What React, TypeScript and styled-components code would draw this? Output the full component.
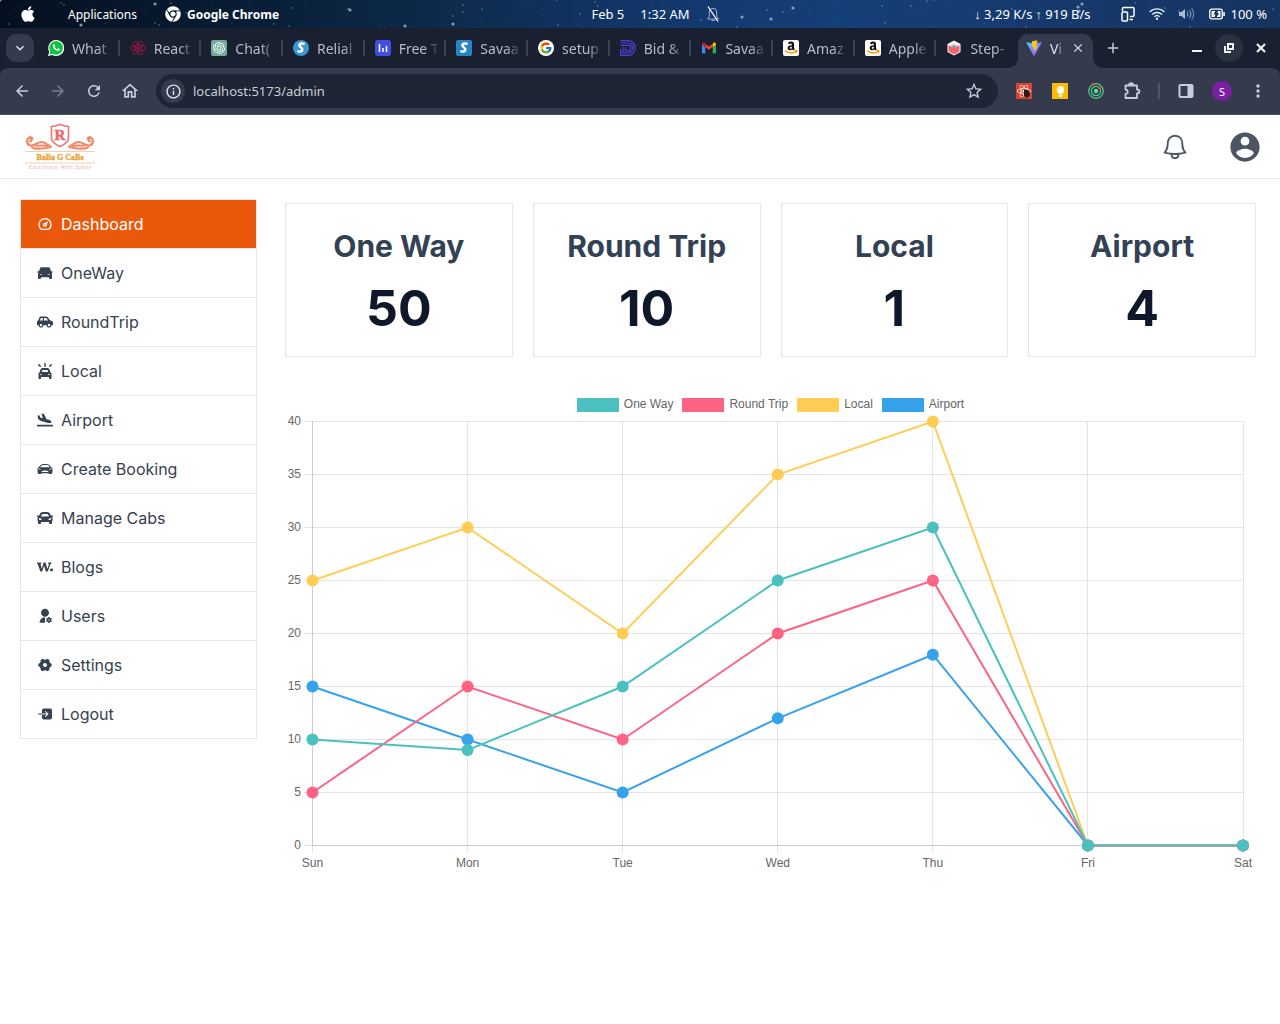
import React from "react";
import styled, { createGlobalStyle, css } from "styled-components";
import { FaApple, FaChrome, FaReact, FaCar, FaCarSide, FaPlaneArrival, FaLightbulb } from "react-icons/fa";
import { FaCarOn } from "react-icons/fa6";
import { SiOpenai, SiWritedotas } from "react-icons/si";
import { FcGoogle } from "react-icons/fc";
import { TbDashboard } from "react-icons/tb";
import { IoCarSport, IoEnter } from "react-icons/io5";
import { IoMdContact } from "react-icons/io";
import { RiUserSettingsFill, RiSettings4Fill } from "react-icons/ri";
import {
  MdArrowBack,
  MdArrowForward,
  MdRefresh,
  MdInfoOutline,
  MdOutlineHome,
  MdStarBorder,
  MdMoreVert,
  MdKeyboardArrowDown,
  MdClose,
  MdAdd,
} from "react-icons/md";

const GlobalStyle = createGlobalStyle`
  *, *::before, *::after { box-sizing: border-box; }
  body { margin: 0; background: #fff; font-family: Inter, "Liberation Sans", sans-serif; }
  button { border: 0; padding: 0; background: none; color: inherit; font: inherit; cursor: pointer; }
  h2, p, ul { margin: 0; padding: 0; }
  svg { display: block; flex: none; }
`;

const desktopFont = css`
  font-family: "Noto Sans", sans-serif;
`;

/* ---------- System bar ---------- */

const SystemBar = styled.header`
  ${desktopFont}
  position: relative;
  display: grid;
  grid-template-columns: 1fr auto 1fr;
  align-items: center;
  height: 28px;
  overflow: hidden;
  color: #fff;
  font-size: 13px;
  background: linear-gradient(90deg, #04101f 0%, #071a30 15%, #0d2b4c 35%, #12386c 52%, #153f78 66%, #163a6e 80%, #163460 100%);
`;

const Stars = styled.svg`
  position: absolute;
  inset: 0;
`;

const BarGroup = styled.div<{ $gap: number; $left?: number; $right?: number; $end?: boolean }>`
  position: relative;
  display: flex;
  align-items: center;
  justify-content: ${(p) => (p.$end ? "flex-end" : "flex-start")};
  gap: ${(p) => p.$gap}px;
  padding-left: ${(p) => p.$left ?? 0}px;
  padding-right: ${(p) => p.$right ?? 0}px;
  white-space: pre;
`;

const AppMenu = styled.span<{ $bold?: boolean }>`
  display: flex;
  align-items: center;
  gap: 6px;
  font-size: 12px;
  font-weight: ${(p) => (p.$bold ? 700 : 400)};
`;

/* ---------- Tab strip ---------- */

const TabStrip = styled.nav`
  ${desktopFont}
  display: flex;
  align-items: center;
  height: 40px;
  padding: 0 5px 0 6px;
  background: #19202f;
  color: #b4bccd;
`;

const TabSearch = styled.button`
  display: grid;
  place-items: center;
  width: 28px;
  height: 28px;
  margin-right: 4px;
  border-radius: 10px;
  background: #353b4c;
  color: #e6e9f0;
`;

const Tab = styled.button<{ $last?: boolean }>`
  position: relative;
  display: flex;
  flex: 1 1 0;
  align-items: center;
  gap: 8px;
  min-width: 0;
  height: 40px;
  padding: 0 5px 0 10px;
  font-size: 14px;

  &::after {
    content: "";
    position: absolute;
    right: 0;
    width: 2px;
    height: 16px;
    background: ${(p) => (p.$last ? "transparent" : "#3a4254")};
  }
`;

const TabTitle = styled.span`
  flex: 1;
  min-width: 0;
  overflow: hidden;
  text-align: left;
  white-space: nowrap;
  mask-image: linear-gradient(90deg, #000 60%, transparent 96%);
`;

const ActiveTab = styled.div`
  position: relative;
  display: flex;
  align-items: center;
  gap: 8px;
  width: 75px;
  height: 34px;
  padding: 0 8px 6px;
  align-self: flex-end;
  border-radius: 10px 10px 0 0;
  background: #353b4c;
  color: #e1e5ee;
  font-size: 14px;

  &::before, &::after {
    content: "";
    position: absolute;
    bottom: 0;
    width: 10px;
    height: 10px;
  }
  &::before { left: -10px; background: radial-gradient(circle at 0 0, transparent 10px, #353b4c 10px); }
  &::after { right: -10px; background: radial-gradient(circle at 100% 0, transparent 10px, #353b4c 10px); }
`;

const StripSpace = styled.div`
  width: 52px;
`;

const WindowButton = styled.button<{ $round?: boolean }>`
  display: grid;
  place-items: center;
  width: 28px;
  height: 28px;
  margin-left: 4px;
  border-radius: 14px;
  background: ${(p) => (p.$round ? "#2a3140" : "transparent")};
  color: #f1f2f4;
`;

const NewTab = styled(WindowButton)`
  margin-left: 6px;
  color: #c2c9d8;
`;

/* ---------- Address row ---------- */

const ToolbarShell = styled.div`
  background: #19202f;
`;

const Toolbar = styled.div`
  ${desktopFont}
  display: flex;
  align-items: center;
  height: 47px;
  padding: 0 4px;
  border-bottom: 1px solid #4a4f5b;
  border-radius: 8px 8px 0 0;
  background: #353b4c;
  color: #c6cde0;
`;

const ToolButton = styled.button<{ $dim?: boolean }>`
  display: grid;
  place-items: center;
  width: 36px;
  height: 36px;
  color: ${(p) => (p.$dim ? "#757d8e" : "inherit")};
`;

const AddressBar = styled.form`
  display: flex;
  flex: 1;
  align-items: center;
  gap: 8px;
  height: 34px;
  margin: 0 8px;
  padding: 0 14px 0 5px;
  border-radius: 17px;
  background: #1e2535;
`;

const SiteInfo = styled.button`
  display: grid;
  place-items: center;
  width: 24px;
  height: 24px;
  border-radius: 12px;
  background: #353b4c;
  color: #e1e5ee;
`;

const AddressInput = styled.input`
  flex: 1;
  min-width: 0;
  padding: 0;
  border: 0;
  outline: 0;
  background: transparent;
  color: #c8cdd8;
  font-family: inherit;
  font-size: 13px;
`;

const ToolDivider = styled.span`
  width: 2px;
  height: 16px;
  margin: 0 8px;
  background: #4d5568;
`;

const Avatar = styled.span`
  display: grid;
  place-items: center;
  width: 20px;
  height: 20px;
  border-radius: 10px;
  background: #7b1fa2;
  color: #fff;
  font-size: 11px;
`;

const ExtensionTile = styled.span<{ $bg: string }>`
  display: grid;
  place-items: center;
  width: 16px;
  height: 16px;
  background: ${(p) => p.$bg};
  color: #fff;
`;

/* ---------- Admin page ---------- */

const PageHeader = styled.header`
  display: flex;
  align-items: center;
  justify-content: space-between;
  height: 64px;
  padding: 0 17px 0 24px;
  border-bottom: 1px solid #e5e7eb;
`;

const HeaderActions = styled.div`
  display: flex;
  align-items: center;
  gap: 40px;
  color: #4b5563;
`;

const Layout = styled.div`
  display: flex;
  align-items: flex-start;
  gap: 28px;
  padding: 20px 24px 20px 20px;
`;

const Sidebar = styled.nav`
  flex: 0 0 237px;
  border: 1px solid #e5e7eb;
`;

const SideLink = styled.a<{ $active?: boolean }>`
  display: flex;
  align-items: center;
  gap: 8px;
  height: 49px;
  padding: 0 16px;
  border-bottom: 1px solid #e5e7eb;
  background: ${(p) => (p.$active ? "#ea580c" : "#fff")};
  color: ${(p) => (p.$active ? "#fff" : "#374151")};
  font-size: 16px;
  line-height: 24px;
  text-decoration: none;

  &:last-child {
    height: 48px;
    border-bottom: 0;
  }
`;

const Main = styled.main`
  flex: 1;
  min-width: 0;
  padding-top: 4px;
`;

const Cards = styled.section`
  display: grid;
  grid-template-columns: repeat(4, 1fr);
  gap: 20px;
`;

const Card = styled.article`
  padding: 24px 20px;
  border: 1px solid #e5e7eb;
  text-align: center;
`;

const CardTitle = styled.h2`
  color: #334155;
  font-size: 30px;
  font-weight: 700;
  line-height: 36px;
`;

const CardValue = styled.p`
  margin-top: 20px;
  color: #0f172a;
  font-size: 50px;
  font-weight: 700;
  line-height: 48px;
`;

const ChartPanel = styled.section`
  margin-top: 39px;
  font-family: "Liberation Sans", Arial, sans-serif;
  font-size: 12px;
  line-height: 14px;
  color: #666;
`;

const Legend = styled.div`
  display: flex;
  justify-content: center;
  gap: 9px;
`;

const LegendItem = styled.button`
  display: flex;
  align-items: center;
  gap: 5px;
`;

const Swatch = styled.span<{ $color: string }>`
  width: 42px;
  height: 14px;
  margin-top: 2px;
  background: ${(p) => p.$color};
`;

const Plot = styled.svg`
  width: 100%;
  height: auto;
  overflow: visible;
`;

/* ---------- Drawings ---------- */

const starData = Array.from({ length: 130 }, (_, i) => ({
  x: (i * 379 + ((i * i * 13) % 97)) % 1280,
  y: (i * 17 + ((i * i * 7) % 23)) % 28,
  r: i % 11 === 0 ? 1.6 : i % 3 === 0 ? 0.9 : 0.5,
  o: i % 11 === 0 ? 0.7 : 0.35,
}));

const StarField = () => (
  <Stars width="100%" height="28" aria-hidden="true">
    {starData.map((s, i) => (
      <circle key={i} cx={s.x} cy={s.y} r={s.r} fill="#b9cbe0" opacity={s.o} />
    ))}
  </Stars>
);

const WhatsAppMark = () => (
  <svg width="16" height="16" viewBox="0 0 16 16">
    <path d="M0 16 1.2 11.8A8 8 0 1 1 4.2 14.9Z" fill="#fff" />
    <path d="M1.4 14.6 2.3 11.4A6.8 6.8 0 1 1 4.6 13.7Z" fill="#12c143" />
    <path d="M5.6 4.2c.4-.3.8-.2 1 .2l.6 1.3c.1.3-.5.8-.5 1.1.4 1 1.400 1.900 2.400 2.300.4 0 .8-.9 1.100-.8l1.500.8c.3.2-.1 1.300-.6 1.600-1.700.9-6.600-1.900-6.300-5.200 0-.5.4-1.100.8-1.300z" fill="#fff" />
  </svg>
);

const ChatMark = () => (
  <svg width="16" height="16" viewBox="0 0 16 16">
    <rect width="16" height="16" rx="2" fill="#74aa9c" />
    <SiOpenai x={2} y={2} size={12} color="#fff" />
  </svg>
);

const SlantS = ({ round }: { round?: boolean }) => (
  <svg width="16" height="16" viewBox="0 0 16 16">
    <rect width="16" height="16" rx={round ? 8 : 2} fill={round ? "#3797d3" : "#2884c5"} />
    <path d="M11.600 4.100C9.800 3.200 6.500 3.100 6.300 5.200c-.1 1.900 3.400 2.100 3.100 4.300-.3 2.500-3.300 2.400-5 1.500" fill="none" stroke="#fff" strokeWidth="2.400" />
  </svg>
);

const BarsMark = () => (
  <svg width="16" height="16" viewBox="0 0 16 16">
    <rect width="16" height="16" rx="3" fill="#4150e0" />
    <path d="M4.500 4v8M8 8v4M11.500 6v6" stroke="#fff" strokeWidth="1.500" />
  </svg>
);

const GoogleMark = () => (
  <svg width="16" height="16" viewBox="0 0 16 16">
    <circle cx="8" cy="8" r="8" fill="#fff" />
    <FcGoogle x={1.5} y={1.5} size={13} />
  </svg>
);

const DMark = () => (
  <svg width="16" height="16" viewBox="0 0 16 16" fill="none" stroke="#5142d6" strokeWidth="1.200">
    <path d="M.6.6H8A7.400 7.400 0 0 1 8 15.400H.6V9M.6 3H8a5 5 0 0 1 0 10H3V7M.6 5.400H8a2.700 2.700 0 0 1 0 5.400H5.400V7.500" />
  </svg>
);

const GmailMark = () => (
  <svg width="16" height="16" viewBox="0 0 16 16">
    <path d="M1 4.500 4.300 7v6.500H2A1 1 0 0 1 1 12.500z" fill="#4285f4" />
    <path d="M15 4.500 11.700 7v6.500H14a1 1 0 0 0 1-1z" fill="#34a853" />
    <path d="M4.300 7V3.800L8 6.600l3.700-2.800V7L8 9.800z" fill="#ea4335" />
    <path d="M1 5V4c0-1.400 1.500-1.900 2.500-1.200l.8.6V7.300z" fill="#c5221f" />
    <path d="M15 5V4c0-1.400-1.500-1.900-2.500-1.200l-.8.6V7.300z" fill="#fbbc04" />
  </svg>
);

const AmazonMark = () => (
  <svg width="16" height="16" viewBox="0 0 16 16">
    <rect width="16" height="16" rx="2" fill="#fff" />
    <path d="M5 3.800c.3-1.700 1.500-2.300 3.100-2.300s2.900.7 2.900 2.400v3.700c0 .8.5 1.100.8 1.500L10.300 10.500c-.5-.3-.9-.7-1.100-1.200C7.700 11 4.600 10.500 4.600 8c0-2.200 2-2.700 4.200-2.800 0-1 0-1.800-.9-1.800-.5 0-.9.3-1 .8zm3.800 2.900c-1.300 0-2 .4-2 1.300 0 1.500 2 1.100 2-.7z" fill="#111" />
    <path d="M2 10.800c3.600 2.700 7.800 2.700 11 .7M11.500 10.500c1.600-.3 2.600-.1 2.300.4 0 .7-.3 1.500-.9 2" fill="none" stroke="#f90" strokeWidth="1.400" />
  </svg>
);

const HexMark = () => (
  <svg width="16" height="16" viewBox="0 0 16 16">
    <path d="M8 .5 14.500 4v8L8 15.500 1.500 12V4z" fill="#fff" />
    <path d="M2.500 5 8 8l5.500-3v6.500L8 14.500l-5.500-3z" fill="#f4626b" />
    <path d="m5 5 3 3.500L11 5 8 6z" fill="#4986e8" />
    <path d="m6 4 2 2.500L10 4z" fill="#f6c343" />
  </svg>
);

const ViteMark = () => (
  <svg width="16" height="16" viewBox="0 0 32 32">
    <defs>
      <linearGradient id="viteBody" x1="0" y1="0" x2="1" y2="1">
        <stop offset="0" stopColor="#41d1ff" />
        <stop offset="1" stopColor="#bd34fe" />
      </linearGradient>
    </defs>
    <path d="M31 6 17 31a1 1 0 0 1-2 0L1 6a1 1 0 0 1 1-1.400l14 2.400 14-2.400A1 1 0 0 1 31 6z" fill="url(#viteBody)" />
    <path d="m22.500.5-10.500 2-.8 12 4.500-1-1.200 5.500 3-.9-1.500 7.500L24 11.500l-4 .8 2.500-8z" fill="#ffc61c" />
  </svg>
);

const MutedBell = () => (
  <svg width="14" height="16" viewBox="0 0 14 16" fill="none" stroke="#9fb3cf" strokeWidth="1">
    <path d="M1.500 13h11l-1.800-2.500V6a3.700 3.700 0 0 0-7.400 0v4.500zM5.500 14.500h3" />
    <path d="M2 .5 12 15.500" stroke="#fff" strokeWidth="1.300" />
  </svg>
);

const PhoneLink = () => (
  <svg width="14" height="16" viewBox="0 0 14 16" fill="none" stroke="#fff" strokeWidth="1.500">
    <path d="M1.500 5V2.500a1 1 0 0 1 1-1h9.500a1 1 0 0 1 1 1V9.500a1 1 0 0 1-1 1H9" />
    <rect x="1" y="6" width="5.500" height="9" rx="1" />
    <path d="M8.500 13.500H12" />
  </svg>
);

const Wifi = () => (
  <svg width="16" height="12" viewBox="0 0 16 12" fill="none" stroke="#dce7f5" strokeWidth="1.300">
    <path d="M.6 4a10.500 10.500 0 0 1 14.800 0M3 6.500a7.200 7.200 0 0 1 10 0M5.300 8.800a3.900 3.900 0 0 1 5.400 0" />
    <circle cx="8" cy="10.700" r="1.200" fill="#dce7f5" stroke="none" />
  </svg>
);

const Volume = () => (
  <svg width="16" height="14" viewBox="0 0 16 14" fill="none" stroke="#7f9bc2" strokeWidth="1.100">
    <path d="M0 5h2.500L6 2v10L2.500 9H0z" fill="#a9bbd6" stroke="none" />
    <path d="M8 4.500a4 4 0 0 1 0 5M10.300 3a6.500 6.500 0 0 1 0 8M12.700 1.500a9 9 0 0 1 0 11" />
  </svg>
);

const Battery = () => (
  <svg width="16" height="12" viewBox="0 0 16 12">
    <rect x=".7" y="1.200" width="12.600" height="9.600" rx="2" fill="none" stroke="#fff" strokeWidth="1.300" />
    <path d="M2.500 3h3.700L4.500 6.600h2L5.500 9h-3zM11.500 9H7.700l2.600-3.800h-2L9 3h2.500z" fill="#fff" />
    <path d="M14.300 4h1.500v4h-1.500z" fill="#fff" />
  </svg>
);

const ReactRed = () => <FaReact size={16} color="#b8134f" />;

const TargetMark = () => (
  <svg width="16" height="16" viewBox="0 0 16 16" fill="none" stroke="#4fd18b" strokeWidth="1.200">
    <circle cx="8" cy="8" r="7.300" />
    <circle cx="8" cy="8" r="4.600" />
    <circle cx="8" cy="8" r="2.200" fill="#4fe3a0" stroke="none" />
    <path d="M4 1.600A7.300 7.300 0 0 1 7 .8M10.500 4a4.600 4.600 0 0 1 2 2.200" stroke="#e8552d" strokeWidth="2.200" />
  </svg>
);

const Puzzle = () => (
  <svg width="18" height="18" viewBox="0 0 18 18" fill="none" stroke="#c6cde0" strokeWidth="1.800" strokeLinejoin="round">
    <path d="M2.500 3.500H14v4c3.200 0 3.200 4 0 4v4.500H2.500v-4c3-.6 3-4-0-4.500z" />
    <path d="M6 3a2 2 0 0 1 4 0z" fill="#c6cde0" stroke="none" />
    <path d="M6 3.200a2.100 2.100 0 0 1 4.200 0z" fill="#c6cde0" />
  </svg>
);

const SidePanel = () => (
  <svg width="16" height="16" viewBox="0 0 16 16" fill="none" stroke="#c6cde0" strokeWidth="2">
    <rect x="1.500" y="2" width="13" height="12" rx="1" />
    <path d="M9.500 2h4.500v12H9.500z" fill="#c6cde0" stroke="none" />
  </svg>
);

const Bell = () => (
  <svg width="24" height="26" viewBox="0 0 24 26" fill="none" stroke="#4b5563" strokeWidth="1.900" strokeLinejoin="round">
    <path d="M12 1.800c4.800 0 7.300 3.400 7.300 7.700 0 4.500.7 6.700 3.200 9.200-6.500 1.700-14.500 1.700-21 0 2.500-2.500 3.200-4.700 3.200-9.200 0-4.300 2.500-7.700 7.300-7.700zM8.500 20.200c0 5.300 7 5.300 7 0" />
  </svg>
);

const FrontCar = ({ size }: { size?: number }) => (
  <svg width={size} height={size} viewBox="0 0 16 16" fill="currentColor">
    <path
      fillRule="evenodd"
      d="M4.400 2.200h7.200c.7 0 1.200.4 1.400 1l1 3.100h1c1 0 1 1.400 0 1.400h-.6c.4.500.6 1 .6 1.700V13c0 .6-.3.9-.9.9h-1.200c-.6 0-.9-.3-.9-.9v-.8H4v.8c0 .6-.3.9-.9.9H1.900c-.6 0-.9-.3-.9-.9V9.400c0-.7.2-1.200.6-1.700H1c-1 0-1-1.400 0-1.400h1l1-3.100c.2-.6.7-1 1.400-1zM3.300 9v1.100h2.500zM12.700 9v1.100h-2.500z"
    />
  </svg>
);

const BrandLogo = () => (
  <svg width="72" height="48" viewBox="0 0 72 48" role="img" aria-label="BaBa G CaBs, Excellence With Safety">
    <path d="M27.500 3.500c3 0 5.500-.8 8.500-2.300 3 1.500 5.500 2.300 8.500 2.300v11.500c0 4-4 6.500-8.500 8.500-4.500-2-8.500-4.500-8.500-8.500z" fill="none" stroke="#ee7479" strokeWidth="1.600" />
    <text x="36" y="17" textAnchor="middle" fontFamily="Liberation Serif, serif" fontWeight="700" fontSize="15" fill="#e8696a" stroke="#e8696a" strokeWidth=".5">R</text>
    {[undefined, "matrix(-1 0 0 1 72 0)"].map((mirror) => (
      <g key={mirror ?? "left"} fill="none" stroke="#f08a6c" strokeLinecap="round" transform={mirror}>
        <path d="M6 18.500c2-.5 2-3.500 0-3.500-4 0-4 6.500.5 7.500 4 .8 6-3 10.500-3.500 4-.3 6 2.500 10 5" strokeWidth="2.200" />
        <path d="M8 24.300c4 2.500 9 1.500 17 .2M12 22.500c4 .5 7-.5 11 .5M4 16c1-3 4-2.500 4.500 0" strokeWidth="2" />
      </g>
    ))}
    <path d="M1 28.500h70M1 40h70" stroke="#f7cdb4" strokeWidth="1" />
    <text x="36" y="37" textAnchor="middle" fontFamily="Liberation Serif, serif" fontWeight="700" fontSize="8" fill="#eda136" stroke="#eda136" strokeWidth=".3">BaBa G CaBs</text>
    <text x="36" y="46" textAnchor="middle" fontFamily="Liberation Serif, serif" fontStyle="italic" fontSize="7" fill="#f0b9b2">Excellence With Safety</text>
  </svg>
);

/* ---------- Data ---------- */

const tabs = [
  { title: "What", icon: <WhatsAppMark /> },
  { title: "React", icon: <ReactRed /> },
  { title: "Chat(", icon: <ChatMark /> },
  { title: "Relial", icon: <SlantS round /> },
  { title: "Free T", icon: <BarsMark /> },
  { title: "Savaa", icon: <SlantS /> },
  { title: "setup", icon: <GoogleMark /> },
  { title: "Bid &", icon: <DMark /> },
  { title: "Savaa", icon: <GmailMark /> },
  { title: "Amaz", icon: <AmazonMark /> },
  { title: "Apple", icon: <AmazonMark /> },
  { title: "Step-", icon: <HexMark /> },
];

const links = [
  { label: "Dashboard", Icon: TbDashboard },
  { label: "OneWay", Icon: FrontCar },
  { label: "RoundTrip", Icon: FaCarSide },
  { label: "Local", Icon: FaCarOn },
  { label: "Airport", Icon: FaPlaneArrival },
  { label: "Create Booking", Icon: IoCarSport },
  { label: "Manage Cabs", Icon: FaCar },
  { label: "Blogs", Icon: SiWritedotas },
  { label: "Users", Icon: RiUserSettingsFill },
  { label: "Settings", Icon: RiSettings4Fill },
  { label: "Logout", Icon: IoEnter },
];

const cards = [
  { title: "One Way", value: 50 },
  { title: "Round Trip", value: 10 },
  { title: "Local", value: 1 },
  { title: "Airport", value: 4 },
];

const days = ["Sun", "Mon", "Tue", "Wed", "Thu", "Fri", "Sat"];
const series = [
  { name: "One Way", color: "#4bc0c0", data: [10, 9, 15, 25, 30, 0, 0] },
  { name: "Round Trip", color: "#ff6384", data: [5, 15, 10, 20, 25, 0, 0] },
  { name: "Local", color: "#ffcd56", data: [25, 30, 20, 35, 40, 0, 0] },
  { name: "Airport", color: "#36a2eb", data: [15, 10, 5, 12, 18, 0, 0] },
];

const plot = { left: 27.5, right: 958, top: 9.5, bottom: 433.5 };
const px = (i: number) => plot.left + ((plot.right - plot.left) * i) / 6;
const py = (v: number) => plot.bottom - ((plot.bottom - plot.top) * v) / 40;
const crisp = (n: number) => Math.floor(n) + 0.5;

const LineChart = () => (
  <Plot viewBox="0 0 971 463" role="img" aria-label="Bookings per day">
    {[0, 5, 10, 15, 20, 25, 30, 35, 40].map((v) => (
      <g key={v}>
        <path d={`M19 ${crisp(py(v))}H${plot.right}`} stroke="rgba(0,0,0,.1)" />
        <text x="16" y={py(v) + 3} textAnchor="end" fill="#666">{v}</text>
      </g>
    ))}
    {days.map((d, i) => (
      <g key={d}>
        <path d={`M${crisp(px(i))} ${plot.top}V441`} stroke="rgba(0,0,0,.1)" />
        <text x={px(i)} y="455" textAnchor="middle" fill="#666">{d}</text>
      </g>
    ))}
    <path d={`M${plot.left} ${plot.top}V${plot.bottom}H${plot.right}`} fill="none" stroke="rgba(0,0,0,.1)" />
    {[...series].reverse().map((s) => (
      <g key={s.name} fill={s.color}>
        <polyline points={s.data.map((v, i) => `${px(i)},${py(v)}`).join(" ")} fill="none" stroke={s.color} strokeWidth="2" />
        {s.data.map((v, i) => (
          <circle key={i} cx={px(i)} cy={py(v)} r="6" />
        ))}
      </g>
    ))}
  </Plot>
);

export default function App() {
  return (
    <>
      <GlobalStyle />
      <SystemBar>
        <StarField />
        <BarGroup $gap={28} $left={19}>
          <BarGroup $gap={31}>
            <FaApple size={18} />
            <AppMenu>Applications</AppMenu>
          </BarGroup>
          <AppMenu $bold>
            <FaChrome size={16} />
            Google Chrome
          </AppMenu>
        </BarGroup>
        <BarGroup $gap={16} $left={31}>
          <span>Feb 5</span>
          <span>1:32 AM</span>
          <MutedBell />
        </BarGroup>
        <BarGroup $gap={14} $right={13} $end>
          <BarGroup $gap={3} $right={16}>
            <span>↓ 3,29 K/s</span>
            <span>↑ 919 B/s</span>
          </BarGroup>
          <PhoneLink />
          <Wifi />
          <Volume />
          <BarGroup $gap={6}>
            <Battery />
            <span>100 %</span>
          </BarGroup>
        </BarGroup>
      </SystemBar>

      <TabStrip aria-label="Browser tabs">
        <TabSearch aria-label="Search tabs">
          <MdKeyboardArrowDown size={16} />
        </TabSearch>
        {tabs.map((t, i) => (
          <Tab key={i} $last={i === tabs.length - 1}>
            {t.icon}
            <TabTitle>{t.title}</TabTitle>
          </Tab>
        ))}
        <ActiveTab>
          <ViteMark />
          <TabTitle>Vi</TabTitle>
          <button aria-label="Close tab">
            <MdClose size={14} />
          </button>
        </ActiveTab>
        <NewTab aria-label="New tab">
          <MdAdd size={18} />
        </NewTab>
        <StripSpace />
        <WindowButton aria-label="Minimize">
          <svg width="10" height="10" viewBox="0 0 10 10">
            <path d="M0 7h10v2H0z" fill="currentColor" />
          </svg>
        </WindowButton>
        <WindowButton $round aria-label="Restore">
          <svg width="10" height="10" viewBox="0 0 10 10" fill="none" stroke="currentColor" strokeWidth="2">
            <path d="M4 1h5v5H4zM1 3v6h6" />
          </svg>
        </WindowButton>
        <WindowButton aria-label="Close">
          <svg width="10" height="10" viewBox="0 0 10 10" stroke="currentColor" strokeWidth="2.200">
            <path d="m1 1 8 8M9 1 1 9" />
          </svg>
        </WindowButton>
      </TabStrip>

      <ToolbarShell>
        <Toolbar>
          <ToolButton aria-label="Back"><MdArrowBack size={18} /></ToolButton>
          <ToolButton $dim aria-label="Forward"><MdArrowForward size={18} /></ToolButton>
          <ToolButton aria-label="Reload"><MdRefresh size={18} /></ToolButton>
          <ToolButton aria-label="Home"><MdOutlineHome size={20} /></ToolButton>
          <AddressBar onSubmit={(e) => e.preventDefault()}>
            <SiteInfo type="button" aria-label="Site information"><MdInfoOutline size={17} /></SiteInfo>
            <AddressInput aria-label="Address" defaultValue="localhost:5173/admin" />
            <button type="button" aria-label="Bookmark"><MdStarBorder size={20} /></button>
          </AddressBar>
          <ToolButton aria-label="React tools">
            <ExtensionTile $bg="#d9432f">
              <svg width="16" height="16" viewBox="0 0 16 16">
                <FaReact x={1} y={1} size={14} color="#fff" />
                <path d="M8 7c3-1 6 1 6 5l-3 3-3-2z" fill="#2b1a1a" />
              </svg>
            </ExtensionTile>
          </ToolButton>
          <ToolButton aria-label="Notes">
            <ExtensionTile $bg="#fbbc04"><FaLightbulb size={11} /></ExtensionTile>
          </ToolButton>
          <ToolButton aria-label="Tracker"><TargetMark /></ToolButton>
          <ToolButton aria-label="Extensions"><Puzzle /></ToolButton>
          <ToolDivider />
          <ToolButton aria-label="Side panel"><SidePanel /></ToolButton>
          <ToolButton aria-label="Profile"><Avatar>S</Avatar></ToolButton>
          <ToolButton aria-label="Menu"><MdMoreVert size={20} /></ToolButton>
        </Toolbar>
      </ToolbarShell>

      <PageHeader>
        <BrandLogo />
        <HeaderActions>
          <button aria-label="Notifications"><Bell /></button>
          <button aria-label="Account"><IoMdContact size={36} /></button>
        </HeaderActions>
      </PageHeader>

      <Layout>
        <Sidebar aria-label="Admin">
          {links.map(({ label, Icon }, i) => (
            <SideLink key={label} href="#" $active={i === 0}>
              <Icon size={16} />
              {label}
            </SideLink>
          ))}
        </Sidebar>
        <Main>
          <Cards>
            {cards.map((c) => (
              <Card key={c.title}>
                <CardTitle>{c.title}</CardTitle>
                <CardValue>{c.value}</CardValue>
              </Card>
            ))}
          </Cards>
          <ChartPanel>
            <Legend>
              {series.map((s) => (
                <LegendItem key={s.name}>
                  <Swatch $color={s.color} />
                  {s.name}
                </LegendItem>
              ))}
            </Legend>
            <LineChart />
          </ChartPanel>
        </Main>
      </Layout>
    </>
  );
}
